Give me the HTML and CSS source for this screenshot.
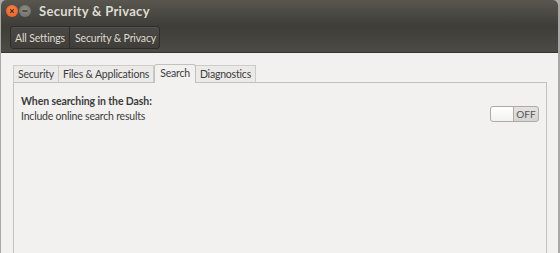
FILE: index.html
```html
<!DOCTYPE html>
<html>
  <head>
    <title>Security &amp; Privacy</title>
    <meta name="viewport" content="width=device-width, initial-scale=1.0">
    <link rel="stylesheet" href="styles.css">
  </head>
  <body>
    <div class="window">
      <div class="header">
        <div class="titlebar">
          <span class="wbtn close">
            <svg width="10" height="10" viewBox="0 0 10 10"><path d="M3.2 3.2 L6.8 6.8 M6.8 3.2 L3.2 6.8" stroke="#5a2a10" stroke-width="1.2"/></svg>
          </span>
          <span class="wbtn min">
            <svg width="10" height="10" viewBox="0 0 10 10"><path d="M2.5 5 H7.5" stroke="#3c3b37" stroke-width="1.4"/></svg>
          </span>
          <span class="title">Security &amp; Privacy</span>
        </div>
        <div class="crumbs">
          <span class="crumb">All Settings</span>
          <span class="crumb">Security &amp; Privacy</span>
        </div>
      </div>
      <div class="content">
        <div class="tabs">
          <span class="tab">Security</span>
          <span class="tab">Files &amp; Applications</span>
          <span class="tab active">Search</span>
          <span class="tab">Diagnostics</span>
        </div>
        <div class="panel">
          <div class="row">
            <div>
              <div class="heading">When searching in the Dash:</div>
              <div class="label">Include online search results</div>
            </div>
            <div class="switch">
              <span class="knob"></span>
              <span class="state">OFF</span>
            </div>
          </div>
        </div>
      </div>
    </div>
  </body>
</html>
```

FILE: styles.css
```css
html, body {
  margin: 0;
  padding: 0;
  height: 100%;
}

body {
  background-color: #a9a8a5;
  font-family: Lato, "Noto Sans", sans-serif;
  font-size: 10.5px;
  letter-spacing: -0.2px;
  color: #3c3c3c;
  overflow: hidden;
}

.window {
  margin-left: 1px;
  width: 557px;
  height: 100%;
  display: flex;
  flex-direction: column;
  background-color: #f2f1f0;
  border-radius: 5px 5px 0 0;
  overflow: hidden;
}

.header {
  height: 53px;
  background: linear-gradient(#58564f, #3e3d38 50%, #4c4b46);
  border-bottom: 1px solid #36352f;
  box-sizing: border-box;
}

.titlebar {
  display: flex;
  align-items: center;
  height: 22px;
  padding-left: 5px;
}

.wbtn {
  width: 12px;
  height: 12px;
  border-radius: 50%;
  display: flex;
  align-items: center;
  justify-content: center;
  margin-right: 1px;
}

.close {
  background: radial-gradient(circle at 50% 40%, #f7894c, #e2581f);
}

.min {
  background: radial-gradient(circle at 50% 40%, #8e8c86, #6b6a65);
}

.title {
  margin-left: 7px;
  color: #dfdbd2;
  font-weight: bold;
  font-size: 13px;
  letter-spacing: 0.3px;
}

.crumbs {
  display: inline-flex;
  margin: 4px 0 0 9px;
  height: 21px;
  border: 1px solid #2e2d29;
  border-radius: 3px;
  background: linear-gradient(#4a4944, #3f3e3a);
  box-shadow: inset 0 1px 0 rgba(255, 255, 255, 0.06);
}

.crumb {
  display: flex;
  align-items: center;
  padding: 0 4px 0 4px;
  color: #dfdbd2;
  font-size: 10.5px;
  letter-spacing: -0.15px;
}

.crumb + .crumb {
  border-left: 1px solid #2e2d29;
  padding-left: 5px;
  padding-right: 3px;
}

.content {
  flex-grow: 1;
  display: flex;
  flex-direction: column;
  padding: 12px 11px 0 12px;
}

.tabs {
  display: flex;
  align-items: flex-end;
  height: 17px;
}

.tab {
  padding: 0 4px;
  height: 16px;
  line-height: 16px;
  border: 1px solid #cfccc7;
  border-bottom: none;
  margin-right: 0;
  background-color: #ebeae8;
  color: #3c3c3c;
}

.tab + .tab {
  border-left: none;
}

.tab.active {
  height: 18px;
  line-height: 17px;
  background-color: #f2f1f0;
  border-color: #c4c1bc;
  border-left: 1px solid #c4c1bc;
  border-radius: 3px 3px 0 0;
  position: relative;
  z-index: 1;
  margin-bottom: -1px;
  padding: 0 5px;
}

.panel {
  flex-grow: 1;
  border: 1px solid #c4c1bc;
  border-bottom: none;
  padding: 11px 7px 0 7px;
}

.row {
  display: flex;
  justify-content: space-between;
  align-items: flex-end;
}

.heading {
  font-weight: bold;
  line-height: 15px;
  letter-spacing: -0.1px;
}

.label {
  line-height: 15px;
}

.switch {
  display: flex;
  width: 47px;
  height: 14px;
  border: 1px solid #aeaba6;
  border-radius: 3px;
  background: linear-gradient(#e4e3e1, #d5d4d1);
  overflow: hidden;
  margin-bottom: 2px;
}

.knob {
  width: 22px;
  background: linear-gradient(#ffffff, #f2f1f0);
  border-right: 1px solid #aeaba6;
  border-radius: 2px 0 0 2px;
}

.state {
  flex-grow: 1;
  text-align: center;
  font-size: 10px;
  letter-spacing: 0;
  line-height: 14px;
  color: #555;
}
```
